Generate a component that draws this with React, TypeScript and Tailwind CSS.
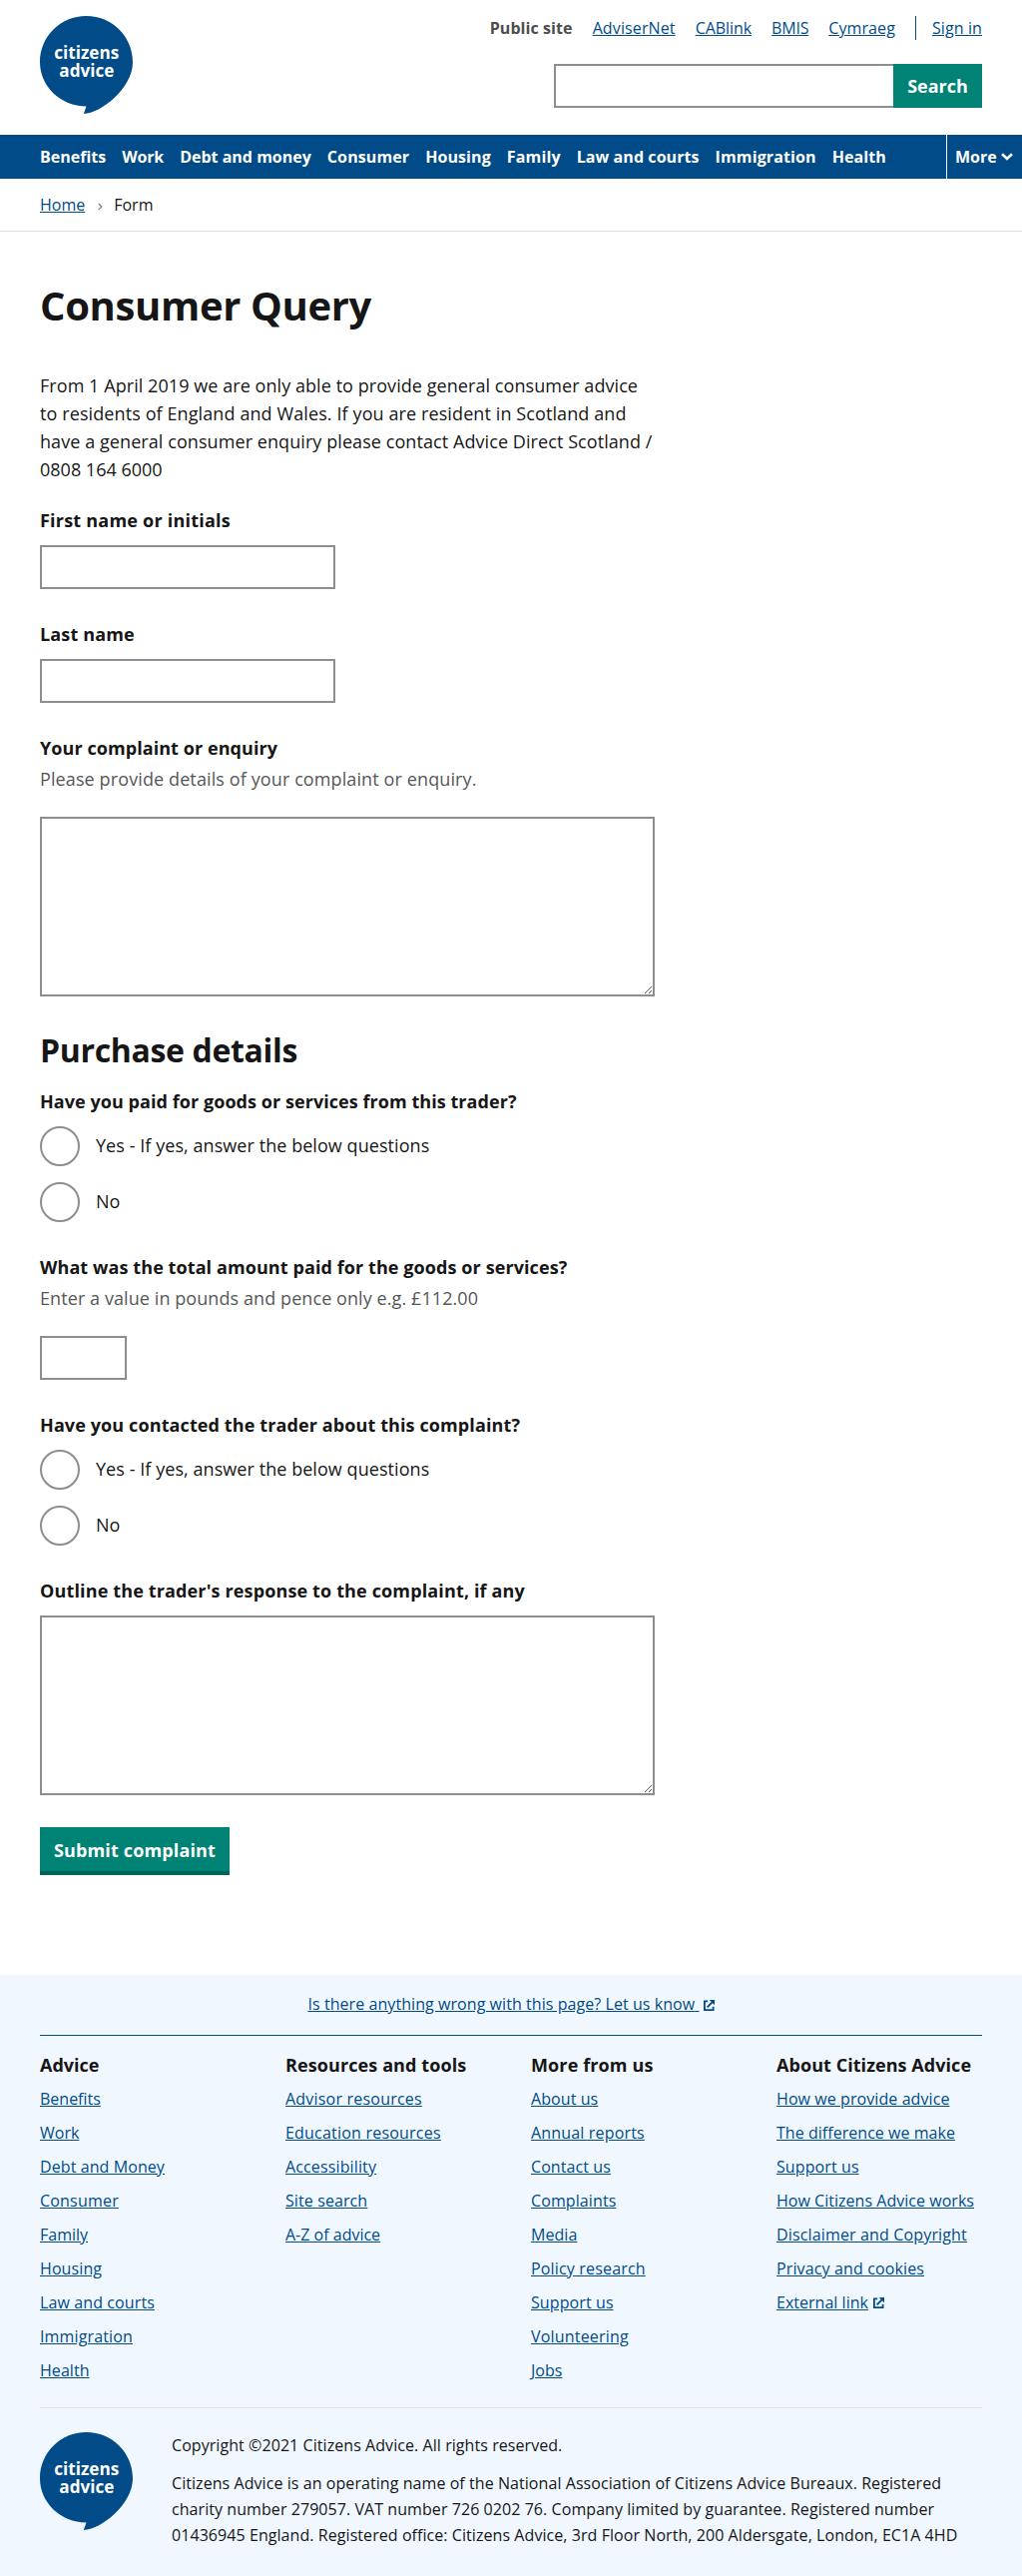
import type { ReactNode } from "react";

type Item = { text: string; track?: string };

const topLinks: Item[] = [
  { text: "AdviserNet", track: "tracking-[0.12px]" },
  { text: "CABlink", track: "tracking-[-0.06px]" },
  { text: "BMIS", track: "tracking-[-0.2px]" },
  { text: "Cymraeg", track: "tracking-[0.1px]" },
];

const navItems: Item[] = [
  { text: "Benefits" },
  { text: "Work", track: "tracking-[-0.14px]" },
  { text: "Debt and money" },
  { text: "Consumer", track: "tracking-[0.1px]" },
  { text: "Housing", track: "tracking-[0.08px]" },
  { text: "Family", track: "tracking-[0.16px]" },
  { text: "Law and courts", track: "tracking-[0.07px]" },
  { text: "Immigration", track: "tracking-[0.12px]" },
  { text: "Health", track: "tracking-[0.05px]" },
];

const footerColumns: { title: Item; links: Item[] }[] = [
  {
    title: { text: "Advice" },
    links: [
      { text: "Benefits" },
      { text: "Work" },
      { text: "Debt and Money", track: "tracking-[0.09px]" },
      { text: "Consumer", track: "tracking-[0.2px]" },
      { text: "Family" },
      { text: "Housing", track: "tracking-[0.1px]" },
      { text: "Law and courts", track: "tracking-[0.11px]" },
      { text: "Immigration", track: "tracking-[0.14px]" },
      { text: "Health", track: "tracking-[0.05px]" },
    ],
  },
  {
    title: { text: "Resources and tools", track: "tracking-[0.1px]" },
    links: [
      { text: "Advisor resources", track: "tracking-[0.21px]" },
      { text: "Education resources", track: "tracking-[0.21px]" },
      { text: "Accessibility", track: "tracking-[0.13px]" },
      { text: "Site search", track: "tracking-[0.1px]" },
      { text: "A-Z of advice" },
    ],
  },
  {
    title: { text: "More from us", track: "tracking-[0.12px]" },
    links: [
      { text: "About us", track: "tracking-[0.08px]" },
      { text: "Annual reports", track: "tracking-[0.17px]" },
      { text: "Contact us", track: "tracking-[0.08px]" },
      { text: "Complaints", track: "tracking-[0.1px]" },
      { text: "Media", track: "tracking-[0.05px]" },
      { text: "Policy research", track: "tracking-[0.17px]" },
      { text: "Support us", track: "tracking-[0.1px]" },
      { text: "Volunteering", track: "tracking-[0.19px]" },
      { text: "Jobs" },
    ],
  },
  {
    title: { text: "About Citizens Advice", track: "tracking-[0.06px]" },
    links: [
      { text: "How we provide advice", track: "tracking-[0.08px]" },
      { text: "The difference we make", track: "tracking-[0.04px]" },
      { text: "Support us", track: "tracking-[0.1px]" },
      { text: "How Citizens Advice works", track: "tracking-[0.03px]" },
      { text: "Disclaimer and Copyright", track: "tracking-[0.15px]" },
      { text: "Privacy and cookies", track: "tracking-[0.13px]" },
      { text: "External link", track: "tracking-[0.02px]" },
    ],
  },
];

function Logo() {
  return (
    <svg width="93" height="98" viewBox="0 0 93 98" className="block shrink-0" role="img" aria-label="Citizens Advice">
      <path fill="#004b88" d="M46.5 0C20.8 0 0 20.4 0 46.3C0 70.5 20.6 90.5 46.5 90.5L43.8 98C61 98 93 72 93 46.6C93 20.4 72.2 0 46.5 0Z" />
      <g fill="#fff" fontFamily="Open Sans, sans-serif" fontWeight="700" fontSize="17.5">
        <text x="14.2" y="43.3" textLength="65" lengthAdjust="spacingAndGlyphs">citizens</text>
        <text x="19.3" y="61.3" textLength="55" lengthAdjust="spacingAndGlyphs">advice</text>
      </g>
    </svg>
  );
}

function ExternalIcon({ className }: { className: string }) {
  return (
    <svg width="11" height="11" viewBox="0 0 11 11" className={className} fill="none" stroke="#004b88">
      <path strokeWidth="1.8" d="M4.2 1.4H.9V10.1H9.6V6.8" />
      <path strokeWidth="1.8" d="M3.6 7.4L8.6 2.4" />
      <path fill="#004b88" stroke="none" d="M5.8 0H11V5.2Z" />
    </svg>
  );
}

function Link({ children, track = "" }: { children: ReactNode; track?: string }) {
  return <a href="#" className={`text-[#004b88] underline ${track}`}>{children}</a>;
}

function Label({ children, track = "" }: { children: ReactNode; track?: string }) {
  return <div className={`text-[18px] leading-7 font-bold ${track}`}>{children}</div>;
}

function RadioPair({ name }: { name: string }) {
  return (
    <div className="mt-[11px] flex flex-col gap-4">
      {["Yes - If yes, answer the below questions", "No"].map((text) => (
        <label key={text} className="flex h-10 items-center gap-4">
          <input type="radio" name={name} className="size-10 appearance-none rounded-full border-2 border-[#8b8f93] bg-white" />
          <span className="pb-0.5 tracking-[0.06px]">{text}</span>
        </label>
      ))}
    </div>
  );
}

const field = "block border-2 border-[#8b8f93] bg-white";

export default function App() {
  return (
    <div className="min-h-[2580px] w-[1024px] bg-white font-['Open_Sans',sans-serif] text-[18px] leading-7 text-[#161616]">
      <header className="flex h-[135px] justify-between px-10 pt-4">
        <Logo />
        <div className="flex flex-col items-end">
          <div className="flex h-6 items-center text-[16px] leading-6">
            <span className="mr-5 font-bold tracking-[0.08px] text-[#4c4c4c]">Public site</span>
            <div className="flex gap-5">
              {topLinks.map((l) => (
                <Link key={l.text} track={l.track}>{l.text}</Link>
              ))}
            </div>
            <div className="ml-5 flex h-6 border-l border-[#004b88] pl-4">
              <Link track="tracking-[0.1px]">Sign in</Link>
            </div>
          </div>
          <div className="mt-6 flex h-11">
            <input className="h-11 w-[340px] border-2 border-r-0 border-[#8b8f93]" />
            <button className="w-[89px] bg-[#008275] text-[18px] leading-7 font-bold text-white">Search</button>
          </div>
        </div>
      </header>

      <nav className="flex h-11 items-center justify-between bg-[#004b88] pl-10 text-[16px] leading-6 font-bold text-white">
        <div className="flex gap-4">
          {navItems.map((item) => (
            <a key={item.text} href="#" className={item.track}>{item.text}</a>
          ))}
        </div>
        <button className="flex h-11 w-[76px] items-center border-l border-white pl-2">
          More
          <svg width="12" height="8" viewBox="0 0 12 8" className="ml-1" fill="none" stroke="#fff" strokeWidth="2.6">
            <path d="M1 1.2L6 6L11 1.2" />
          </svg>
        </button>
      </nav>

      <div className="flex h-[53px] items-center border-b border-[#e0e1e2] px-10 text-[16px] leading-6">
        <Link>Home</Link>
        <svg width="5" height="8" viewBox="0 0 5 8" className="mt-[4px] ml-[13px]" fill="none" stroke="#777b80" strokeWidth="1.2">
          <path d="M.7 .8L3.8 4L.7 7.2" />
        </svg>
        <span className="ml-[11px]">Form</span>
      </div>

      <main className="h-[1746px] px-10 pt-[48px]">
        <h1 className="text-[40px] leading-[52px] font-bold tracking-[-0.35px]">Consumer Query</h1>
        <div className="w-[616px]">
          <p className="mt-10 whitespace-nowrap">
            <span className="block tracking-[0.062px]">From 1 April 2019 we are only able to provide general consumer advice</span>
            <span className="block tracking-[0.1px]">to residents of England and Wales. If you are resident in Scotland and</span>
            <span className="block tracking-[0.075px]">have a general consumer enquiry please contact Advice Direct Scotland /</span>
            <span className="block">0808 164 6000</span>
          </p>
          <div className="mt-[23px]">
            <Label track="tracking-[0.22px]">First name or initials</Label>
            <input className={`${field} mt-[11px] h-11 w-[296px]`} />
          </div>
          <div className="mt-[31px]">
            <Label track="tracking-[0.15px]">Last name</Label>
            <input className={`${field} mt-[11px] h-11 w-[296px]`} />
          </div>
          <div className="mt-[31px]">
            <Label track="tracking-[0.07px]">Your complaint or enquiry</Label>
            <p className="mt-[3px] tracking-[0.11px] text-[#555759]">Please provide details of your complaint or enquiry.</p>
            <textarea className={`${field} mt-6 h-[180px] w-full`} />
          </div>
          <h2 className="mt-8 text-[32px] leading-[44px] font-bold tracking-[-0.34px]">Purchase details</h2>
          <div className="mt-[15px]">
            <Label track="tracking-[0.06px]">Have you paid for goods or services from this trader?</Label>
            <RadioPair name="paid" />
          </div>
          <div className="mt-[31px]">
            <Label track="tracking-[0.09px]">What was the total amount paid for the goods or services?</Label>
            <p className="mt-[3px] tracking-[0.08px] text-[#555759]">Enter a value in pounds and pence only e.g. £112.00</p>
            <input className={`${field} mt-6 h-11 w-[87px]`} />
          </div>
          <div className="mt-[31px]">
            <Label track="tracking-[0.11px]">Have you contacted the trader about this complaint?</Label>
            <RadioPair name="contacted" />
          </div>
          <div className="mt-[31px]">
            <Label track="tracking-[0.14px]">Outline the trader's response to the complaint, if any</Label>
            <textarea className={`${field} mt-[11px] h-[180px] w-full`} />
          </div>
          <button className="mt-8 block h-12 w-[190px] border-b-4 border-[#006358] bg-[#008275] pt-0.5 font-bold tracking-[0.14px] text-white">
            Submit complaint
          </button>
        </div>
      </main>

      <footer className="h-[602px] bg-[#f0f7ff] px-10 text-[16px]">
        <div className="flex h-[61px] items-center justify-center border-b border-[#004b88] leading-6">
          <a href="#" className="pb-0.5 tracking-[0.065px] whitespace-pre text-[#004b88] underline">Is there anything wrong with this page? Let us know </a>
          <ExternalIcon className="ml-1" />
        </div>
        <div className="grid h-[373px] grid-cols-[repeat(4,246px)] content-start border-b border-[#e0e1e2] pt-[15px]">
          {footerColumns.map((col) => (
            <div key={col.title.text}>
              <h3 className={`text-[18px] leading-7 font-bold whitespace-nowrap ${col.title.track ?? ""}`}>{col.title.text}</h3>
              <ul className="mt-[3px]">
                {col.links.map((l) => (
                  <li key={l.text} className="flex h-[34px] items-center leading-[26px] whitespace-nowrap">
                    <Link track={l.track}>{l.text}</Link>
                    {l.text === "External link" && <ExternalIcon className="ml-[5px]" />}
                  </li>
                ))}
              </ul>
            </div>
          ))}
        </div>
        <div className="flex gap-[39px] pt-6">
          <Logo />
          <div className="leading-[26px] tracking-[0.065px]">
            <p>Copyright ©2021 Citizens Advice. All rights reserved.</p>
            <p className="mt-3">
              Citizens Advice is an operating name of the National Association of Citizens Advice Bureaux. Registered charity number 279057. VAT number 726 0202 76. Company limited by guarantee. Registered number 01436945 England. Registered office: Citizens Advice, 3rd Floor North, 200 Aldersgate, London, EC1A 4HD
            </p>
          </div>
        </div>
      </footer>
    </div>
  );
}
